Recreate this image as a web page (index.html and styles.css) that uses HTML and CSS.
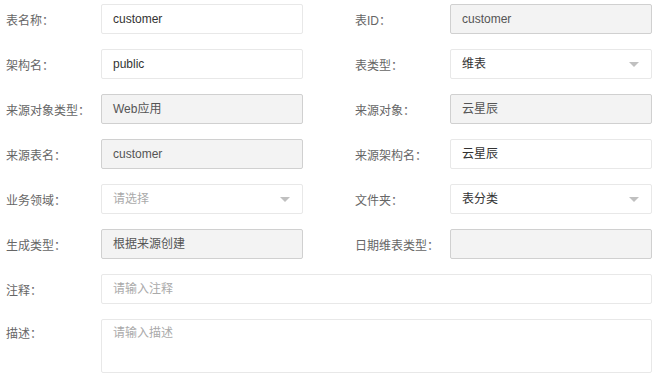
FILE: index.html
```html
<!DOCTYPE html>
<html lang="zh-CN">
<head>
  <meta charset="UTF-8" />
  <meta name="viewport" content="width=device-width, initial-scale=1.0"/>
  <title>表信息</title>
  <link rel="stylesheet" href="styles.css">
</head>
<body>
  <form class="form">
    <div class="field">
      <label class="label">表名称：</label>
      <div class="control">customer</div>
    </div>
    <div class="field">
      <label class="label">表ID：</label>
      <div class="control disabled">customer</div>
    </div>

    <div class="field">
      <label class="label">架构名：</label>
      <div class="control">public</div>
    </div>
    <div class="field">
      <label class="label">表类型：</label>
      <div class="control select">维表<span class="arrow"></span></div>
    </div>

    <div class="field">
      <label class="label">来源对象类型：</label>
      <div class="control disabled">Web应用</div>
    </div>
    <div class="field">
      <label class="label">来源对象：</label>
      <div class="control disabled">云星辰</div>
    </div>

    <div class="field">
      <label class="label">来源表名：</label>
      <div class="control disabled">customer</div>
    </div>
    <div class="field">
      <label class="label">来源架构名：</label>
      <div class="control">云星辰</div>
    </div>

    <div class="field">
      <label class="label">业务领域：</label>
      <div class="control select placeholder">请选择<span class="arrow"></span></div>
    </div>
    <div class="field">
      <label class="label">文件夹：</label>
      <div class="control select">表分类<span class="arrow"></span></div>
    </div>

    <div class="field">
      <label class="label">生成类型：</label>
      <div class="control disabled">根据来源创建</div>
    </div>
    <div class="field">
      <label class="label">日期维表类型：</label>
      <div class="control disabled"></div>
    </div>

    <div class="field wide">
      <label class="label">注释：</label>
      <div class="control placeholder">请输入注释</div>
    </div>

    <div class="field wide top">
      <label class="label">描述：</label>
      <div class="control textarea placeholder">请输入描述</div>
    </div>
  </form>
</body>
</html>
```

FILE: styles.css
```css
/* RESET */
* { box-sizing: border-box; margin: 0; padding: 0; }
body {
  font-family: 'Liberation Sans', 'Noto Sans CJK SC', sans-serif;
  font-size: 12px;
  color: #333;
  background: #fff;
}

/* FORM GRID */
.form {
  display: grid;
  grid-template-columns: 297px 297px;
  column-gap: 52px;
  row-gap: 15px;
  padding: 4px 10px 0 6px;
}
.field {
  display: flex;
  align-items: center;
}
.field.wide { grid-column: 1 / -1; }
.field.top { align-items: flex-start; }
.field.top .label { line-height: 30px; }

.label {
  width: 95px;
  flex-shrink: 0;
  color: #666;
}

/* CONTROLS */
.control {
  flex: 1;
  height: 30px;
  line-height: 28px;
  padding: 0 11px;
  border: 1px solid #e8e8e8;
  border-radius: 2px;
  background: #fff;
  color: #333;
  position: relative;
  white-space: nowrap;
}
.control.disabled {
  background: #f3f3f3;
  border-color: #d0d0d0;
  color: #555;
}
.control.placeholder { color: #aaa; }
.control.textarea {
  height: 54px;
  line-height: 20px;
  padding-top: 3px;
}

/* SELECT ARROW */
.arrow {
  position: absolute;
  right: 12px;
  top: 12px;
  width: 0;
  height: 0;
  border-left: 5px solid transparent;
  border-right: 5px solid transparent;
  border-top: 5px solid #c0c0c0;
}
```
